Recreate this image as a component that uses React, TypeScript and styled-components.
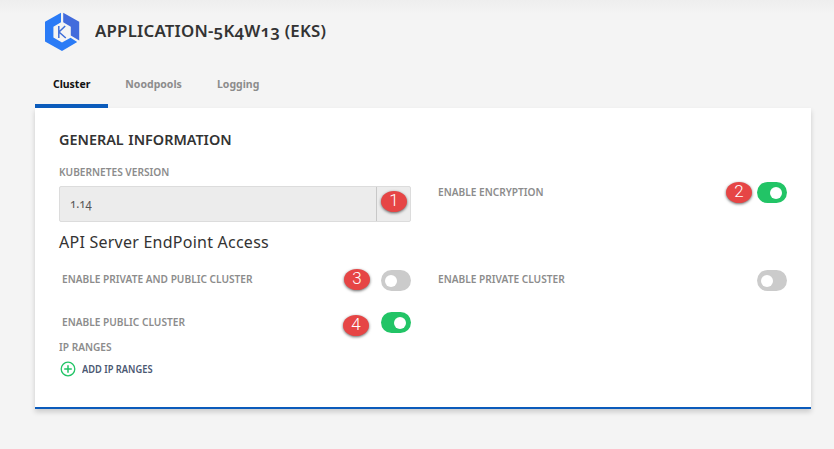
import React, { useState } from "react";
import styled, { createGlobalStyle } from "styled-components";

const GlobalStyle = createGlobalStyle`
  * { box-sizing: border-box; }
  body {
    margin: 0;
    background: #f4f4f4 linear-gradient(#eeeeee, #f4f4f4 14px) no-repeat;
    font-family: "Noto Sans", "Open Sans", sans-serif;
    font-feature-settings: "onum" 1;
    color: #333;
  }
`;

const Page = styled.main`
  width: 834px;
  height: 449px;
  padding: 0 23px 0 35px;
  overflow: hidden;
`;

const Header = styled.header`
  display: flex;
  align-items: center;
  gap: 15px;
  height: 64px;
  padding-left: 9px;
`;

const Logo = styled.svg`
  display: block;
  flex: none;
`;

const Title = styled.h1`
  margin: 0 0 2px;
  font-size: 16px;
  font-weight: 600;
  line-height: 24px;
  letter-spacing: 0.2px;
  white-space: nowrap;
  transform: scaleX(1.052);
  transform-origin: left;
`;

const Tabs = styled.nav`
  display: flex;
  height: 44px;
`;

const Tab = styled.button<{ $active: boolean; $width: number }>`
  width: ${(p) => p.$width}px;
  padding: 0 0 1px;
  border: 0;
  border-bottom: 4px solid ${(p) => (p.$active ? "#0b5bbb" : "transparent")};
  background: none;
  font: 700 11px/16px "Noto Sans", sans-serif;
  color: ${(p) => (p.$active ? "#111" : "#8c8c8c")};
  white-space: nowrap;
`;

const TabText = styled.span`
  display: inline-block;
  transform: scaleX(0.955);
`;

const Card = styled.section`
  height: 301px;
  padding: 21px 24px 0;
  background: #fff;
  border-bottom: 2px solid #0b5bbb;
  box-shadow: 0 3px 5px rgba(0, 0, 0, 0.17);
`;

const SectionTitle = styled.h2`
  margin: -1px 0 0;
  height: 34px;
  font-size: 15px;
  font-weight: 600;
  line-height: 22px;
  word-spacing: 1px;
  white-space: nowrap;
  transform: scaleX(0.959);
  transform-origin: left;
`;

const SubTitle = styled.h3`
  margin: 0;
  height: 38px;
  padding-top: 8px;
  font-size: 16px;
  font-weight: 400;
  line-height: 24px;
  letter-spacing: 0.24px;
  white-space: nowrap;
`;

const Columns = styled.div<{ $height: number }>`
  display: grid;
  grid-template-columns: 352px 349px;
  column-gap: 27px;
  height: ${(p) => p.$height}px;
`;

const Label = styled.span<{ $lift?: number }>`
  display: block;
  margin-top: ${(p) => -(p.$lift ?? 0)}px;
  font-size: 11px;
  font-weight: 600;
  line-height: 20px;
  color: #8c8c8c;
  white-space: nowrap;
  transform: scaleX(0.922);
  transform-origin: left;
`;

const Select = styled.div`
  display: flex;
  height: 36px;
  margin-top: 4px;
  border: 1px solid #dcdcdc;
  border-radius: 2px;
  background: #ececec;
`;

const SelectValue = styled.span`
  flex: 1;
  padding-left: 10px;
  font-size: 13px;
  line-height: 33px;
  color: #555;
  transform: scaleX(0.88);
  transform-origin: 10px 50%;
`;

const SelectArrow = styled.span`
  display: flex;
  width: 34px;
  padding: 4px 0 0 4px;
  border-left: 1px solid #c8c8c8;
`;

const SettingRow = styled.div<{ $indent?: number; $top?: number }>`
  display: flex;
  align-items: flex-start;
  justify-content: space-between;
  padding-left: ${(p) => p.$indent ?? 0}px;
  padding-top: ${(p) => p.$top ?? 0}px;
`;

const Controls = styled.div<{ $gap: number }>`
  display: flex;
  gap: ${(p) => p.$gap}px;
`;

const Switch = styled.button<{ $on: boolean }>`
  display: flex;
  align-items: center;
  justify-content: ${(p) => (p.$on ? "flex-end" : "flex-start")};
  width: 30px;
  height: 21px;
  padding: 0 5px 0 4px;
  border: 0;
  border-radius: 10.5px;
  background: ${(p) => (p.$on ? "#22c466" : "#cbcbcb")};

  &::before {
    content: "";
    width: 12px;
    height: 12px;
    border-radius: 50%;
    background: #fff;
  }
`;

const Badge = styled.span<{ $drop?: number }>`
  width: 26px;
  height: 21px;
  margin-top: ${(p) => p.$drop ?? 0}px;
  border-radius: 50%;
  background: #e64545;
  box-shadow: 0 1px 3px rgba(0, 0, 0, 0.6);
  color: #fff;
  font: 300 17px/19px Roboto, sans-serif;
  font-feature-settings: normal;
  text-align: center;
`;

const AddButton = styled.button`
  display: flex;
  align-items: center;
  gap: 6px;
  height: 18px;
  margin-top: 3px;
  padding: 0 0 0 1px;
  border: 0;
  background: none;
  font: 600 10px/18px "Noto Sans", sans-serif;
  color: #4b5872;
  white-space: nowrap;
`;

const AddText = styled.span`
  transform: scaleX(0.93);
  transform-origin: left;
`;

function EksLogo() {
  return (
    <Logo width="36" height="40" viewBox="0 0 36 40" aria-hidden="true">
      <path fill="#2a7bf6" d="M17 .8 1 9.8v19.6L18 39l15.2-9-6.6-4.2L18 30.4 9.4 25.5V14.7l7.6-4.4Z" />
      <path fill="#426bdc" d="M19.2.8 35.2 9.8v18.6L26.8 23.4V14.7l-7.6-4.4Z" />
      <path fill="none" stroke="#3e6ed8" strokeWidth="1.5" d="M14.8 14v12M21.2 14l-6.2 6 6.8 6" />
    </Logo>
  );
}

function PlusIcon() {
  return (
    <svg width="16" height="16" viewBox="0 0 16 16" fill="none" stroke="#22c466" aria-hidden="true">
      <circle cx="8" cy="8" r="6.8" strokeWidth="1.3" />
      <path d="M8 4.2v7.6M4.2 8h7.6" strokeWidth="1.5" />
    </svg>
  );
}

function Toggle({ initial, name }: { initial: boolean; name: string }) {
  const [on, setOn] = useState(initial);
  return <Switch $on={on} role="switch" aria-checked={on} aria-label={name} onClick={() => setOn(!on)} />;
}

const TABS = [
  { name: "Cluster", width: 73 },
  { name: "Noodpools", width: 92 },
  { name: "Logging", width: 77 },
];

export default function App() {
  const [tab, setTab] = useState("Cluster");
  return (
    <Page>
      <GlobalStyle />
      <Header>
        <EksLogo />
        <Title>APPLICATION-5K4W13 (EKS)</Title>
      </Header>
      <Tabs>
        {TABS.map((t) => (
          <Tab key={t.name} $active={tab === t.name} $width={t.width} onClick={() => setTab(t.name)}>
            <TabText>{t.name}</TabText>
          </Tab>
        ))}
      </Tabs>
      <Card>
        <SectionTitle>GENERAL INFORMATION</SectionTitle>
        <Columns $height={60}>
          <div>
            <Label>KUBERNETES VERSION</Label>
            <Select>
              <SelectValue>1.14</SelectValue>
              <SelectArrow>
                <Badge>1</Badge>
              </SelectArrow>
            </Select>
          </div>
          <SettingRow $top={20}>
            <Label>ENABLE ENCRYPTION</Label>
            <Controls $gap={5}>
              <Badge>2</Badge>
              <Toggle initial name="Enable encryption" />
            </Controls>
          </SettingRow>
        </Columns>
        <SubTitle>API Server EndPoint Access</SubTitle>
        <Columns $height={42}>
          <SettingRow $indent={3} $top={10}>
            <Label $lift={1}>ENABLE PRIVATE AND PUBLIC CLUSTER</Label>
            <Controls $gap={11}>
              <Badge $drop={-1}>3</Badge>
              <Toggle initial={false} name="Enable private and public cluster" />
            </Controls>
          </SettingRow>
          <SettingRow $top={10}>
            <Label $lift={1}>ENABLE PRIVATE CLUSTER</Label>
            <Toggle initial={false} name="Enable private cluster" />
          </SettingRow>
        </Columns>
        <Columns $height={35}>
          <SettingRow $indent={3} $top={10}>
            <Label>ENABLE PUBLIC CLUSTER</Label>
            <Controls $gap={12}>
              <Badge $drop={3}>4</Badge>
              <Toggle initial name="Enable public cluster" />
            </Controls>
          </SettingRow>
        </Columns>
        <Label>IP RANGES</Label>
        <AddButton>
          <PlusIcon />
          <AddText>ADD IP RANGES</AddText>
        </AddButton>
      </Card>
    </Page>
  );
}
